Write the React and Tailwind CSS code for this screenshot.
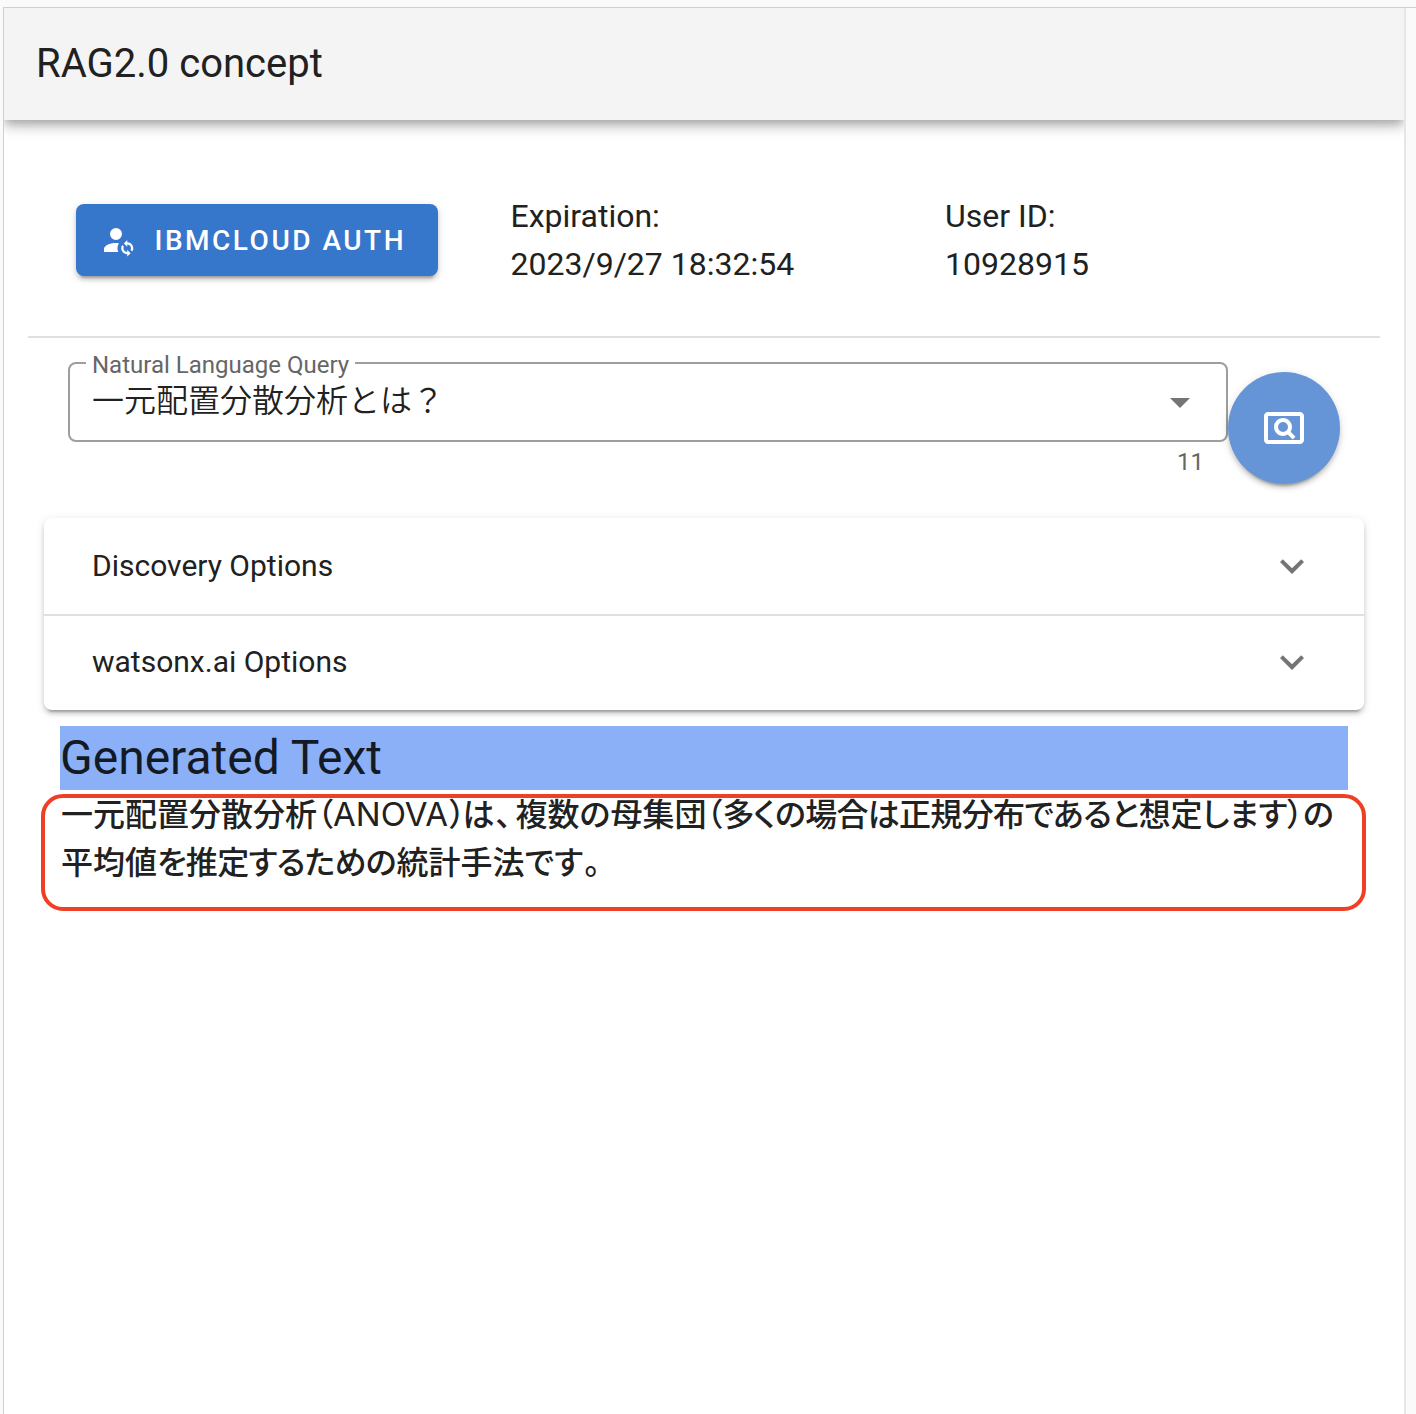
import { MdOutlinePageview, MdArrowDropDown } from 'react-icons/md';

function AccountSync() {
  return (
    <svg viewBox="0 0 24 24" className="mb-px h-9 w-9 shrink-0 fill-current">
      <path d="M10 4A4 4 0 0 0 6 8A4 4 0 0 0 10 12A4 4 0 0 0 14 8A4 4 0 0 0 10 4M10 14C5.58 14 2 15.79 2 18V20H11.5A6.5 6.5 0 0 1 11 17.5A6.5 6.5 0 0 1 11.95 14.14C11.32 14.06 10.68 14 10 14M17.5 13.5V12L15.25 14.25L17.5 16.5V15A2.5 2.5 0 0 1 19.74 18.62L20.83 19.71A4 4 0 0 0 17.5 13.5M17.5 20A2.5 2.5 0 0 1 15.26 16.38L14.17 15.29A4 4 0 0 0 17.5 21.5V23L19.75 20.75L17.5 18.5V20Z" />
    </svg>
  );
}

function Panel({ title }) {
  return (
    <div className="flex h-24 items-center justify-between px-12 text-[30px] leading-[30px] not-first:shadow-[inset_0_2px_0_#e0e0e0]">
      <span>{title}</span>
      <svg viewBox="0 0 24 24" className="h-12 w-12 fill-[#757575]">
        <path d="M7.41 8.58L12 13.17L16.59 8.58L18 10L12 16L6 10L7.41 8.58Z" />
      </svg>
    </div>
  );
}

function Info({ label, value }) {
  return (
    <div className="w-[434.5px] text-[32px] leading-[48px]">
      <div>{label}</div>
      <div>{value}</div>
    </div>
  );
}

export default function App() {
  return (
    <div className="h-[1414px] w-[1416px] overflow-hidden bg-[#fafafa] pt-[7px] pl-[3px] font-['Roboto','Noto_Sans_CJK_JP',sans-serif] text-[#212121]">
      <div className="flex h-full border-t border-l border-[#d0d0d0]">
        <div className="w-[1402px] shrink-0 overflow-hidden border-r-2 border-[#e6e6e6] bg-white">
          <header className="flex h-28 items-center bg-[#f4f4f4] pl-8 text-[40px] leading-[60px] shadow-[0_4px_8px_-2px_rgba(0,0,0,0.2),0_8px_10px_0_rgba(0,0,0,0.14),0_2px_20px_0_rgba(0,0,0,0.12)]">
            RAG2.0 concept
          </header>

          <section className="mx-6 flex h-[218px] items-start border-b-2 border-[#e0e0e0] pt-[72px] pl-12">
            <button className="mt-3 mr-[72.5px] flex h-[72px] w-[362px] items-center gap-[17.5px] rounded-lg bg-[#3676cb] pl-[25px] text-[28px] font-medium tracking-[2.5px] text-white shadow-[0_6px_2px_-4px_rgba(0,0,0,0.2),0_4px_4px_0_rgba(0,0,0,0.14),0_2px_10px_0_rgba(0,0,0,0.12)]">
              <AccountSync />
              <span className="pt-0.5">IBMCLOUD AUTH</span>
            </button>
            <Info label="Expiration:" value="2023/9/27 18:32:54" />
            <Info label="User ID:" value="10928915" />
          </section>

          <section className="flex h-[180px] pl-16">
            <div className="w-[1160px]">
              <fieldset className="mt-[13px] h-[91px] rounded-lg border-2 border-[#9e9e9e] pl-4 leading-none">
                <legend className="h-6 px-1.5 text-2xl leading-7 whitespace-nowrap text-[#666]">Natural Language Query</legend>
                <div className="mt-0.5 flex h-12 w-full items-center justify-between pr-[22px] pl-1.5 text-[32px] leading-[48px]">
                  <span className="font-[350]">一元配置分散分析とは？</span>
                  <MdArrowDropDown className="mt-0.5 h-12 w-12 text-[#757575]" />
                </div>
              </fieldset>
              <div className="mt-2 pr-6 text-right text-2xl leading-6 text-[#666]">11</div>
            </div>
            <button className="mt-[34px] flex h-28 w-28 items-center justify-center rounded-full bg-[#6695d7] text-white shadow-[0_6px_2px_-4px_rgba(0,0,0,0.2),0_4px_4px_0_rgba(0,0,0,0.14),0_2px_10px_0_rgba(0,0,0,0.12)]">
              <MdOutlinePageview className="h-12 w-12" />
            </button>
          </section>

          <section className="mx-10 rounded-lg bg-white shadow-[0_6px_2px_-4px_rgba(0,0,0,0.2),0_4px_4px_0_rgba(0,0,0,0.14),0_2px_10px_0_rgba(0,0,0,0.12)]">
            <Panel title="Discovery Options" />
            <Panel title="watsonx.ai Options" />
          </section>

          <h2 className="mx-14 mt-4 h-16 bg-[#8bb0f8] text-[48px] leading-[64px] text-[#131a24]">Generated Text</h2>
          <div className="mt-1 ml-[37px] h-[117px] w-[1325px] rounded-[22px] border-4 border-[#ee4027] pl-4 font-['Noto_Sans_CJK_JP',sans-serif] text-[32px] leading-[48px] font-medium whitespace-nowrap [font-feature-settings:'palt']">
            <div className="-mt-2.5 h-12">
              一元配置分散分析（<span className="inline-block w-[116.5px] font-['Inter'] text-[33px] font-normal">ANOVA</span>
              <span className="tracking-[-3px]">）</span>
              <span className="tracking-[3px]">は</span><span className="-ml-0.5 tracking-[4px]">、</span>複数の母集団（
              <span className="tracking-[-0.7px]">多くの場合は正規分布であると</span><span className="tracking-[-0.2px]">想定します）の</span>
            </div>
            <div>
              平均値<span className="tracking-[-0.7px]">を推定するため</span>の統計手法です<span className="ml-px">。</span>
            </div>
          </div>
        </div>
      </div>
    </div>
  );
}
